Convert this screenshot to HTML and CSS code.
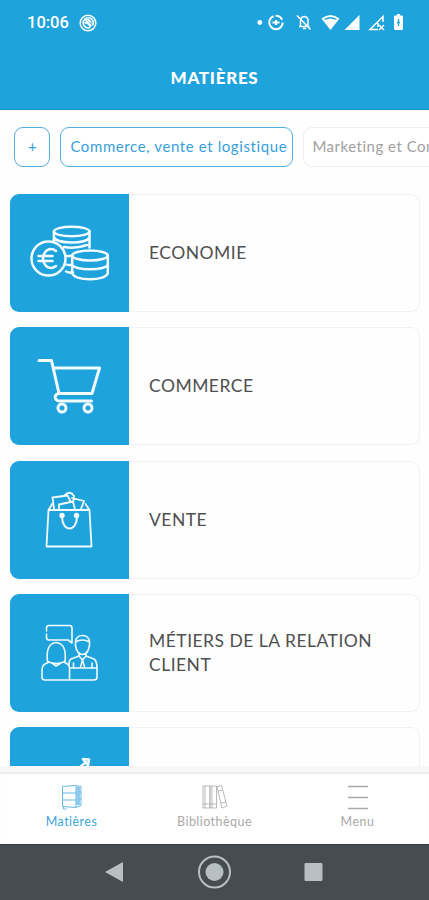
FILE: index.html
```html
<!DOCTYPE html>
<html lang="fr">
<head>
<meta charset="utf-8">
<meta name="viewport" content="width=device-width">
<title>Matières</title>
<link rel="stylesheet" href="styles.css">
</head>
<body>
<div class="app">
  <header class="header">
    <div class="status">
      <span class="clock">10:06</span>
      <svg class="status-app" viewBox="0 0 18 18"><circle cx="9" cy="9" r="7.800"/><path d="M13.600 11.500A5.100 5.100 0 1 0 11.500 13.400M5.500 9Q9 8 11.500 13M6.500 6.200L12.500 12"/><path d="M6.500 5Q12 4 13 10L9.500 7.500z" fill="#fff" stroke="none"/></svg>
      <svg class="status-icons" viewBox="256 12 150 20">
        <circle cx="259.800" cy="22.500" r="2.400" fill="#fff"/>
        <circle cx="276" cy="22.500" r="6.700" fill="none" stroke="#fff" stroke-width="2" stroke-dasharray="29 2 8 3"/>
        <path d="M272.500 22.500h7M276 20v5" stroke="#fff" stroke-width="2"/>
        <path d="M299 26.500h10.500M300.500 26v-5q0-4 4-4.500 3.500.5 3.500 4v5M303 28.500h3M297 15.500l13.500 14" fill="none" stroke="#fff" stroke-width="1.500"/>
        <path d="M321.500 18.500q9-7 18 0L330.500 30z" fill="#fff"/>
        <path d="M324.500 19.500q6-3.500 12 0" fill="none" stroke="#1fa3dc" stroke-width="1.300"/>
        <path d="M359.500 15v15h-15z" fill="#fff"/>
        <path d="M383 22v-5.500L370 29.500h8M378 23v4M379 25l5 5M384 25l-5 5" fill="none" stroke="#fff" stroke-width="1.500"/>
        <path d="M395 15.500h2v-1.500h3v1.500h2a1 1 0 0 1 1 1v12a1.500 1.500 0 0 1-1.500 1.500h-6a1.500 1.500 0 0 1-1.500-1.500v-12a1 1 0 0 1 1-1z" fill="#fff"/>
        <path d="M398.500 19v7M397 22.500h3" stroke="#1fa3dc" stroke-width="1.300"/>
      </svg>
    </div>
    <h1 class="title">MATIÈRES</h1>
  </header>

  <main class="content">
    <div class="chips">
      <button class="chip chip-add">+</button>
      <button class="chip chip-active">Commerce, vente et logistique</button>
      <button class="chip chip-idle">Marketing et Communication</button>
    </div>
    <div class="cards">
      <article class="card">
        <div class="tile"><svg class="art" viewBox="11 194 118 118">
          <g stroke-width="2.500">
            <ellipse cx="71.700" cy="231.500" rx="17.800" ry="4.800"/>
            <path d="M53.900 231.500v9M89.500 231.500v16M54 237.500q3 5 17.700 5t17.800-5M64 247q12 2 23-2M66 256h6M65 264q3 1.500 7 .7M66 271.500q3 1.500 7 1"/>
            <circle cx="48.500" cy="258.500" r="17"/>
            <ellipse cx="90" cy="255.500" rx="17.800" ry="5"/>
            <path d="M72.200 255.500v17c0 9 35.600 9 35.600 0v-17M72.200 264c0 7 35.600 7 35.600 0"/>
            <path d="M56 251q-5-4-10 0-6 7.500 0 15 5 4 10 0M38.500 256h14M38.500 261h14"/>
          </g></svg></div>
        <h2 class="label">ECONOMIE</h2>
      </article>
      <article class="card">
        <div class="tile"><svg class="art" viewBox="11 327 118 118">
          <g stroke-width="3"><path d="M39 360.500h12.500l7.500 33h33l7.500-25.500H54M58.500 393.500q-4.500 1.500-3 5 1 2.500 4 2.500h32"/><circle cx="62" cy="408" r="4"/><circle cx="88" cy="408" r="4"/></g></svg></div>
        <h2 class="label">COMMERCE</h2>
      </article>
      <article class="card">
        <div class="tile"><svg class="art" viewBox="11 460.500 118 118">
          <g stroke-width="1.800"><path d="M48.500 509.500h41l2 36.500h-45zM48.500 509.500l4-6.500M89.500 509.500l-4-6M54 508l-1.500-11 15-2 3 6M59 508v-4l14-3 2 8M65 494.500q5-5 9 1l-1 7M72 497.500l12 3-3 8"/><path d="M62 516c0 16 15 16 15 0" stroke-width="2"/><circle cx="62" cy="515" r="1.800" fill="#fff"/><circle cx="76.500" cy="515" r="1.800" fill="#fff"/></g></svg></div>
        <h2 class="label">VENTE</h2>
      </article>
      <article class="card">
        <div class="tile"><svg class="art" viewBox="11 594 118 118">
          <g stroke-width="1.600"><path d="M46.500 631v-3q0-2.500 2.500-2.500h20.500q2.500 0 2.500 2.500v15l-4-3H49q-2.500 0-2.500-2.500V634"/><path d="M47.500 661.500q-2-18 8.500-19 11 1 9 19-9 4-17.500 0zM52 663l4 3 5-3M49 662l-4 2q-3 1.500-3 7v6q0 3 3 3h24.500v-12q0-4-6-6M69.500 680H94q3 0 3-3v-9H70"/><path d="M75.500 641.500v4q1.500 9 7 9t7-9v-4q-1-6-7-6t-7 6zM75.500 642q7-4 14 0M79 653v3l-8 3q-2 1-2 6M86 653v3l8 3q3 2 3 9M79 656l3.500 4 3.500-4M82.500 660l-2 7M82.500 660l2 7M73.500 663v5M92 663v5"/></g></svg></div>
        <h2 class="label">MÉTIERS DE LA RELATION CLIENT</h2>
      </article>
      <article class="card">
        <div class="tile"><svg class="art" viewBox="11 727 118 118"><path d="M83 759l6 .5-1 6zM86 762l-7 6-9 10-8-6-14 14" stroke-width="2.500"/></svg></div>
      </article>
    </div>
  </main>

  <nav class="tabs">
    <a class="tab tab-active"><svg class="tab-icon" viewBox="0 0 26 26"><path d="M3.500 2.500L16 1.500l6 1v19l-5 2-13.500-1zM3.500 9h13l5.500-1M3.500 16h13l5.500-1M17 2v21M4.500 22.500V25h3"/><path d="M17 3h4v18h-4z" fill="#8ccbed" stroke="none"/></svg><span class="tab-text">Matières</span></a>
    <a class="tab"><svg class="tab-icon" viewBox="0 0 26 26"><path d="M1 2h7v22h-7zM8 2h6.500v22H8zM15 3l4.500-1.500L25 22l-5 2zM3 2v22M10 2v22M16 7l5-1M19 19l5-1M1 20h6M8 20h6"/></svg><span class="tab-text">Bibliothèque</span></a>
    <a class="tab"><svg class="tab-icon" viewBox="0 0 26 26"><path d="M3 2.500h20M3 13.500h20M3 24.500h20" stroke-width="1.600"/></svg><span class="tab-text">Menu</span></a>
  </nav>
  <footer class="system">
    <svg class="system-icons" viewBox="0 0 429 56"><path d="M105 28l18-10v20z" fill="#b7bfc2"/><circle cx="214.500" cy="28" r="15.500" fill="none" stroke="#b7bfc2" stroke-width="2"/><circle cx="214.500" cy="28" r="9" fill="#b7bfc2"/><rect x="304.500" y="19" width="18" height="18" rx="1" fill="#b7bfc2"/></svg>
  </footer>
</div>
</body>
</html>
```
FILE: styles.css
```css
* { box-sizing: border-box; }
body { margin: 0; background: #fefefe; font-family: Lato, "Open Sans", sans-serif; }
.app { width: 429px; height: 900px; display: flex; flex-direction: column; overflow: hidden; }
.header { flex: none; height: 110px; background: #1fa3dc; color: #fff; border-bottom: 1px solid #168fc8; }
.status { height: 45px; display: flex; align-items: center; padding: 0 23px 0 27px; }
.clock { width: 52px; font: 500 16.500px/20px Roboto, sans-serif; }
.status-app { width: 18px; height: 18px; fill: none; stroke: #fff; stroke-width: 1.600; }
.status-icons { width: 150px; height: 20px; margin: 0 0 1px auto; }
.title { margin: 22px 0 0; text-align: center; font-size: 17px; line-height: 22px; font-weight: 900; letter-spacing: .7px; }
.content { flex: none; height: 656px; overflow: hidden; }
.chips { display: flex; gap: 10px; padding: 17px 0 0 14.400px; overflow: hidden; }
.chip { flex: none; height: 40px; padding: 0 0 3px 9px; border: 1px solid #54ade0; border-radius: 9px; background: #fff; color: #389fda; font: 400 15px/20px Lato, sans-serif; text-align: left; white-space: nowrap; }
.chip-add { width: 36px; padding: 0 0 3px; text-align: center; }
.chip-active { width: 233px; letter-spacing: .6px; }
.chip-idle { width: 230px; padding-left: 8px; border-color: #eeeef0; color: #a0a0a0; letter-spacing: .5px; }
.cards { display: flex; flex-direction: column; gap: 15.300px; padding: 27px 9px 0 10px; }
.card { flex: none; height: 118px; display: flex; align-items: center; box-shadow: inset 0 0 0 1px #f0f1f3; border-radius: 9px; overflow: hidden; }
.tile { flex: none; width: 119px; height: 118px; padding-left: 1px; background: #1fa3dc; }
.art { display: block; width: 118px; height: 118px; fill: none; stroke: #f2fbff; stroke-linecap: round; stroke-linejoin: round; }
.label { margin: 0; padding: 0 20px; color: #505050; font-size: 17.500px; line-height: 24px; font-weight: 400; letter-spacing: .48px; }
.tabs { flex: none; height: 78px; display: flex; border-top: 6px solid #f7f7f7; background: #fff; box-shadow: inset 0 2px 1px #ececec; }
.tab { flex: 1; display: flex; flex-direction: column; align-items: center; padding-top: 12px; color: #a9a9a9; }
.tab-active { color: #40a5dc; }
.tab-icon { width: 26px; height: 26px; fill: none; stroke: currentColor; stroke-width: .8; }
.tab-text { margin-top: 3px; font-size: 12.500px; line-height: 18px; letter-spacing: .45px; }
.system { flex: none; height: 56px; background: #454d52; border-top: 1px solid #303b3e; }
.system-icons { display: block; width: 429px; height: 56px; margin-top: -1px; }
```
